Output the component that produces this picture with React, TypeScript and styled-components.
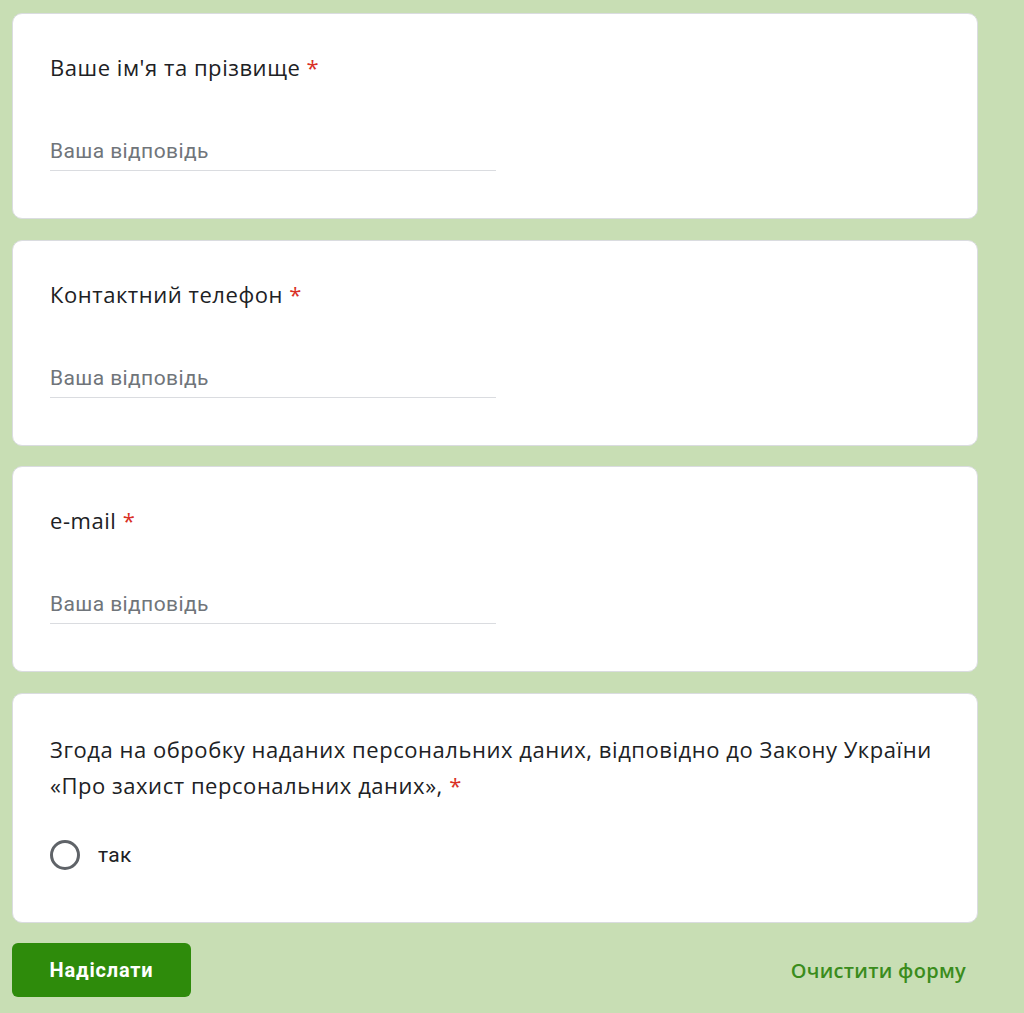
import React from 'react';
import styled, { createGlobalStyle } from 'styled-components';

const Global = createGlobalStyle`
  html, body {
    margin: 0;
    padding: 0;
    background: #c8deb4;
  }
  * {
    box-sizing: border-box;
  }
`;

const Page = styled.main`
  width: 1024px;
  min-height: 1013px;
  padding: 13px 46px 0 12px;
  display: flex;
  flex-direction: column;
  gap: 20.5px;
  font-family: 'Open Sans', Roboto, Arial, sans-serif;
  color: #202124;
`;

const Card = styled.section<{ $h: number; $top?: number }>`
  background: #fff;
  border: 1px solid #dadce0;
  border-radius: 10px;
  height: ${(p) => p.$h}px;
  padding: ${(p) => p.$top ?? 35}px 37px 0;
  display: flex;
  flex-direction: column;
`;

const Title = styled.div`
  font-size: 22px;
  line-height: 36px;
  letter-spacing: 0.55px;
  max-width: 910px;
`;

const Star = styled.span`
  color: #d93025;
`;

const Field = styled.div`
  margin-top: 46px;
  width: 446px;
  height: 40px;
  border-bottom: 1px solid #dadce0;
  font-family: Roboto, Arial, sans-serif;
  font-size: 21px;
  letter-spacing: 0.4px;
  line-height: 40px;
  color: #70757a;
`;

const Option = styled.label`
  margin-top: 37px;
  display: flex;
  align-items: center;
  gap: 18px;
  font-family: Roboto, Arial, sans-serif;
  font-size: 21px;
  letter-spacing: 0.3px;
  color: #202124;
`;

const Radio = styled.span`
  width: 30px;
  height: 30px;
  border: 3px solid #5f6368;
  border-radius: 50%;
`;

const Footer = styled.div`
  display: flex;
  justify-content: space-between;
  align-items: center;
`;

const Submit = styled.button`
  width: 179px;
  height: 54px;
  border: none;
  border-radius: 6px;
  background: #2e8b0b;
  color: #fff;
  font-family: Roboto, Arial, sans-serif;
  font-size: 20px;
  font-weight: 700;
  letter-spacing: 0.8px;
`;

const Clear = styled.button`
  border: none;
  background: none;
  color: #3a8c1c;
  font-family: 'Open Sans', Roboto, Arial, sans-serif;
  font-size: 20px;
  font-weight: 600;
  letter-spacing: 0.3px;
  padding: 0 12px 0 0;
`;

const questions = ["Ваше ім'я та прізвище", 'Контактний телефон', 'e-mail'];

export default function App() {
  return (
    <>
      <Global />
      <Page>
        {questions.map((q) => (
          <Card key={q} $h={206}>
            <Title>
              {q} <Star>*</Star>
            </Title>
            <Field>Ваша відповідь</Field>
          </Card>
        ))}
        <Card $h={230} $top={37}>
          <Title>
            Згода на обробку наданих персональних даних, відповідно до Закону України «Про захист
            персональних даних», <Star>*</Star>
          </Title>
          <Option>
            <Radio />
            так
          </Option>
        </Card>
        <Footer>
          <Submit>Надіслати</Submit>
          <Clear>Очистити форму</Clear>
        </Footer>
      </Page>
    </>
  );
}
